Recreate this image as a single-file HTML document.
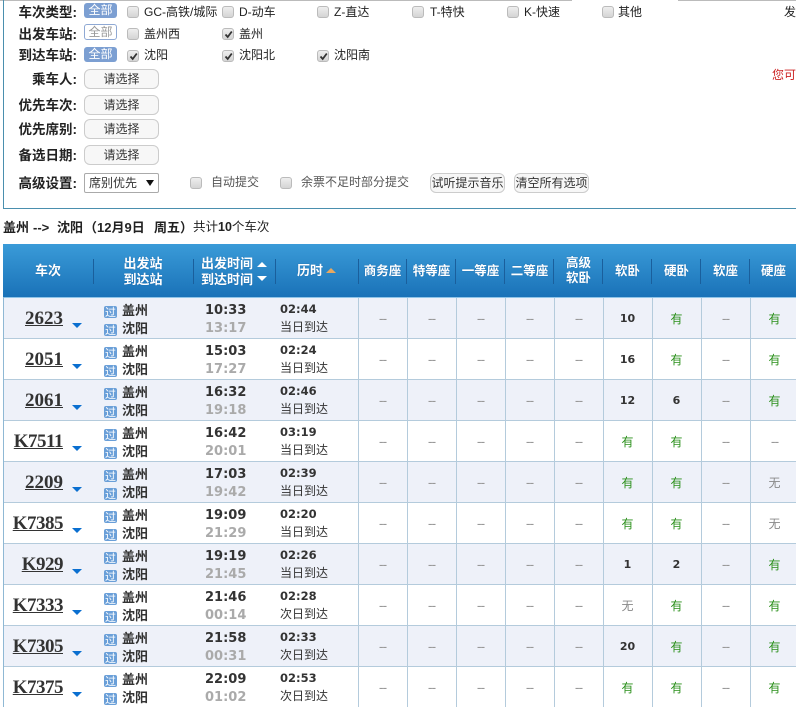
<!DOCTYPE html>
<html><head><meta charset="utf-8"><style>
html,body{margin:0;padding:0;width:796px;height:707px;overflow:hidden;background:#fff}
body{position:relative;font-family:"Liberation Sans","Noto Sans CJK SC",sans-serif;font-size:12px;color:#333}
.a{position:absolute;white-space:nowrap}
.l{position:absolute;left:0;width:77px;text-align:right;font-weight:bold;font-size:13.5px;line-height:18px;color:#222}
.all{position:absolute;left:84px;width:33px;height:15px;line-height:14px;border-radius:3px;background:#7c9fd2;color:#fff;text-align:center;font-size:12px;box-sizing:border-box}
.all.o{background:#fff;border:1px solid #8fa9d4;color:#999;line-height:14px;height:16px}
.b{position:absolute;left:84px;width:75px;height:20px;box-sizing:border-box;border:1px solid #ccc;border-radius:6px;background:#f7f7f7;text-align:center;line-height:18px;font-size:12px;color:#333}
.c{position:absolute;width:12px;height:12px;box-sizing:border-box;border:1px solid #bbb;border-radius:3px;background:linear-gradient(#eee,#d4d4d4)}
.c svg{position:absolute;left:1px;top:1px;width:9px;height:9px}
.t{position:absolute;font-size:12px;line-height:16px;white-space:nowrap;color:#222}
.h{position:absolute;color:#fff;font-weight:bold;font-size:13px;line-height:18px;text-align:center;white-space:nowrap;text-shadow:0 0 1px #1a5f9c}
.s{position:absolute;top:259px;width:1px;height:25px;background:#1a5f9c}
.ttl{position:absolute;top:219px;font-size:13px;line-height:17px;color:#222;white-space:nowrap}
.ttl.bd{font-weight:bold}
table{position:absolute;left:3px;top:298px;border-collapse:separate;border-spacing:0;table-layout:fixed;width:796px}
td{height:40px;padding:0;border-bottom:1px solid #b4cbdc;text-align:center;font-size:12px;color:#888;position:relative;box-sizing:content-box}
tr:nth-child(odd) td{background:#eef1f9}
tr:nth-child(even) td{background:#fff}
td.n{text-align:right;padding-right:30px;padding-top:2px;height:38px;width:60px;font:bold 19px "Liberation Serif",serif;color:#333;text-decoration:underline;border-left:0}
td.n.kk{letter-spacing:-.5px}
td.n:after{content:"";position:absolute;left:69px;top:25px;border-left:5px solid transparent;border-right:5px solid transparent;border-top:5px solid #0a6fd0}
td.st{text-align:left;vertical-align:top;padding-left:11px;padding-top:4px;height:36px;width:89px;font-weight:bold;font-size:13px;line-height:18px;color:#333;white-space:nowrap}
td.st i{display:inline-block;width:13px;height:12px;background:#6a9fd8;color:#fff;font:normal 11px/12px "Noto Sans CJK SC",sans-serif;text-align:center;border-radius:2px;margin-right:5px;vertical-align:-1px}
td.tm{text-align:left;vertical-align:top;padding-left:12px;padding-top:4px;height:36px;width:70px;font:bold 13px/18px "DejaVu Sans",sans-serif;color:#333}
td.tm span{color:#aaa}
td.d{text-align:left;vertical-align:top;padding-left:5px;padding-top:2px;height:38px;width:78px;line-height:18px;font-size:12px;color:#333}
td.d b{font:bold 11.5px "DejaVu Sans",sans-serif}
td.v{width:47px;border-left:1px solid #b4cbdc;padding:0 1px 0 0;font-size:14px;letter-spacing:-1px;color:#999}
td.v.y{color:#2a8f1a;font-size:12px;letter-spacing:0}
td.v.w{color:#888;font-size:12px;letter-spacing:0}
td.v.k{font:bold 11px "DejaVu Sans",sans-serif;color:#333;letter-spacing:0}
</style></head><body>
<div class="a" style="left:0;top:0;width:572px;height:1px;background:#bbb"></div>
<div class="a" style="left:678px;top:0;width:118px;height:1px;background:#bbb"></div>
<div class="a" style="left:3px;top:0;width:1px;height:209px;background:#4a8fae"></div>
<div class="a" style="left:3px;top:208px;width:793px;height:1px;background:#4a8fae"></div>

<div class="l" style="top:4px">车次类型:</div>
<div class="l" style="top:26px">出发车站:</div>
<div class="l" style="top:47px">到达车站:</div>
<div class="l" style="top:71px">乘车人:</div>
<div class="l" style="top:97px">优先车次:</div>
<div class="l" style="top:121px">优先席别:</div>
<div class="l" style="top:147px">备选日期:</div>
<div class="l" style="top:175px">高级设置:</div>

<div class="all" style="top:3px">全部</div>
<div class="all o" style="top:24px">全部</div>
<div class="all" style="top:47px">全部</div>

<div class="c" style="left:127px;top:6px"></div><div class="t" style="left:144px;top:4px">GC-高铁/城际</div>
<div class="c" style="left:222px;top:6px"></div><div class="t" style="left:239px;top:4px">D-动车</div>
<div class="c" style="left:317px;top:6px"></div><div class="t" style="left:334px;top:4px">Z-直达</div>
<div class="c" style="left:412px;top:6px"></div><div class="t" style="left:430px;top:4px">T-特快</div>
<div class="c" style="left:507px;top:6px"></div><div class="t" style="left:524px;top:4px">K-快速</div>
<div class="c" style="left:602px;top:6px"></div><div class="t" style="left:618px;top:4px">其他</div>
<div class="t" style="left:784px;top:4px">发</div>

<div class="c" style="left:127px;top:28px"></div><div class="t" style="left:144px;top:26px">盖州西</div>
<div class="c" style="left:222px;top:28px"><svg viewBox="0 0 9 9"><path d="M1.5 4.5L3.7 7L7.8 1.5" fill="none" stroke="#333" stroke-width="1.8"/></svg></div><div class="t" style="left:239px;top:26px">盖州</div>

<div class="c" style="left:127px;top:50px"><svg viewBox="0 0 9 9"><path d="M1.5 4.5L3.7 7L7.8 1.5" fill="none" stroke="#333" stroke-width="1.8"/></svg></div><div class="t" style="left:144px;top:47px">沈阳</div>
<div class="c" style="left:222px;top:50px"><svg viewBox="0 0 9 9"><path d="M1.5 4.5L3.7 7L7.8 1.5" fill="none" stroke="#333" stroke-width="1.8"/></svg></div><div class="t" style="left:239px;top:47px">沈阳北</div>
<div class="c" style="left:317px;top:50px"><svg viewBox="0 0 9 9"><path d="M1.5 4.5L3.7 7L7.8 1.5" fill="none" stroke="#333" stroke-width="1.8"/></svg></div><div class="t" style="left:334px;top:47px">沈阳南</div>

<div class="b" style="top:69px">请选择</div>
<div class="b" style="top:95px">请选择</div>
<div class="b" style="top:119px">请选择</div>
<div class="b" style="top:145px">请选择</div>
<div class="t" style="left:772px;top:67px;color:#c22">您可</div>

<div class="a" style="left:84px;top:173px;width:75px;height:20px;box-sizing:border-box;border:1px solid #aaa;border-radius:2px;background:#fff;line-height:18px;padding-left:4px;font-size:12px;color:#333">席别优先<span style="position:absolute;left:61px;top:6px;border-left:4px solid transparent;border-right:4px solid transparent;border-top:6px solid #111"></span></div>
<div class="c" style="left:190px;top:177px"></div><div class="t" style="left:211px;top:174px;color:#555">自动提交</div>
<div class="c" style="left:280px;top:177px"></div><div class="t" style="left:301px;top:174px;color:#555">余票不足时部分提交</div>
<div class="a" style="left:430px;top:173px;width:75px;height:20px;box-sizing:border-box;border:1px solid #ccc;border-radius:6px;background:#f7f7f7;text-align:center;line-height:18px;font-size:12px;overflow:hidden">试听提示音乐</div>
<div class="a" style="left:514px;top:173px;width:75px;height:20px;box-sizing:border-box;border:1px solid #ccc;border-radius:6px;background:#f7f7f7;text-align:center;line-height:18px;font-size:12px;overflow:hidden">清空所有选项</div>

<div class="ttl bd" style="left:3px">盖州</div>
<div class="ttl bd" style="left:33px">--&gt;</div>
<div class="ttl bd" style="left:57px">沈阳</div>
<div class="ttl bd" style="left:84px">（</div>
<div class="ttl bd" style="left:97px">12月9日</div>
<div class="ttl bd" style="left:154px">周五</div>
<div class="ttl bd" style="left:180px">）</div>
<div class="ttl" style="left:193px;font-size:12.5px">共计<b>10</b>个车次</div>

<div class="a" style="left:3px;top:244px;width:793px;height:53px;background:linear-gradient(#3a9bd8,#1a72b8)"></div>
<div class="a" style="left:3px;top:297px;width:793px;height:1px;background:#8fc4e8"></div>
<div class="h" style="left:3px;width:90px;top:262px">车次</div>
<div class="h" style="left:93px;width:100px;top:256px;line-height:16px">出发站<br>到达站</div>
<div class="h" style="left:201px;top:256px;line-height:15.5px;font-size:13px">出发时间<br>到达时间</div>
<div class="a" style="left:257px;top:262px;border-left:5px solid transparent;border-right:5px solid transparent;border-bottom:5px solid #fff"></div>
<div class="a" style="left:257px;top:276px;border-left:5px solid transparent;border-right:5px solid transparent;border-top:5px solid #fff"></div>
<div class="h" style="left:297px;top:262px">历时</div>
<div class="a" style="left:326px;top:268px;border-left:5px solid transparent;border-right:5px solid transparent;border-bottom:5px solid #e8a860"></div>
<div class="h" style="left:358px;width:49px;top:262px;font-size:12.5px">商务座</div>
<div class="h" style="left:407px;width:49px;top:262px;font-size:12.5px">特等座</div>
<div class="h" style="left:456px;width:49px;top:262px;font-size:12.5px">一等座</div>
<div class="h" style="left:505px;width:49px;top:262px;font-size:12.5px">二等座</div>
<div class="h" style="left:554px;width:49px;top:256px;font-size:12.5px;line-height:15px">高级<br>软卧</div>
<div class="h" style="left:603px;width:49px;top:262px;font-size:12.5px">软卧</div>
<div class="h" style="left:652px;width:49px;top:262px;font-size:12.5px">硬卧</div>
<div class="h" style="left:701px;width:49px;top:262px;font-size:12.5px">软座</div>
<div class="h" style="left:750px;width:47px;top:262px;font-size:12.5px">硬座</div>
<div class="s" style="left:93px"></div><div class="s" style="left:193px"></div><div class="s" style="left:275px"></div><div class="s" style="left:358px"></div><div class="s" style="left:406px"></div><div class="s" style="left:455px"></div><div class="s" style="left:504px"></div><div class="s" style="left:553px"></div><div class="s" style="left:602px"></div><div class="s" style="left:651px"></div><div class="s" style="left:700px"></div><div class="s" style="left:749px"></div>

<table><tbody>
<tr><td class="n">2623</td><td class="st"><i>过</i>盖州<br><i>过</i>沈阳</td><td class="tm">10:33<br><span>13:17</span></td><td class="d"><b>02:44</b><br>当日到达</td><td class="v">--</td><td class="v">--</td><td class="v">--</td><td class="v">--</td><td class="v">--</td><td class="v k">10</td><td class="v y">有</td><td class="v">--</td><td class="v y">有</td></tr>
<tr><td class="n">2051</td><td class="st"><i>过</i>盖州<br><i>过</i>沈阳</td><td class="tm">15:03<br><span>17:27</span></td><td class="d"><b>02:24</b><br>当日到达</td><td class="v">--</td><td class="v">--</td><td class="v">--</td><td class="v">--</td><td class="v">--</td><td class="v k">16</td><td class="v y">有</td><td class="v">--</td><td class="v y">有</td></tr>
<tr><td class="n">2061</td><td class="st"><i>过</i>盖州<br><i>过</i>沈阳</td><td class="tm">16:32<br><span>19:18</span></td><td class="d"><b>02:46</b><br>当日到达</td><td class="v">--</td><td class="v">--</td><td class="v">--</td><td class="v">--</td><td class="v">--</td><td class="v k">12</td><td class="v k">6</td><td class="v">--</td><td class="v y">有</td></tr>
<tr><td class="n kk">K7511</td><td class="st"><i>过</i>盖州<br><i>过</i>沈阳</td><td class="tm">16:42<br><span>20:01</span></td><td class="d"><b>03:19</b><br>当日到达</td><td class="v">--</td><td class="v">--</td><td class="v">--</td><td class="v">--</td><td class="v">--</td><td class="v y">有</td><td class="v y">有</td><td class="v">--</td><td class="v">--</td></tr>
<tr><td class="n">2209</td><td class="st"><i>过</i>盖州<br><i>过</i>沈阳</td><td class="tm">17:03<br><span>19:42</span></td><td class="d"><b>02:39</b><br>当日到达</td><td class="v">--</td><td class="v">--</td><td class="v">--</td><td class="v">--</td><td class="v">--</td><td class="v y">有</td><td class="v y">有</td><td class="v">--</td><td class="v w">无</td></tr>
<tr><td class="n kk">K7385</td><td class="st"><i>过</i>盖州<br><i>过</i>沈阳</td><td class="tm">19:09<br><span>21:29</span></td><td class="d"><b>02:20</b><br>当日到达</td><td class="v">--</td><td class="v">--</td><td class="v">--</td><td class="v">--</td><td class="v">--</td><td class="v y">有</td><td class="v y">有</td><td class="v">--</td><td class="v w">无</td></tr>
<tr><td class="n kk">K929</td><td class="st"><i>过</i>盖州<br><i>过</i>沈阳</td><td class="tm">19:19<br><span>21:45</span></td><td class="d"><b>02:26</b><br>当日到达</td><td class="v">--</td><td class="v">--</td><td class="v">--</td><td class="v">--</td><td class="v">--</td><td class="v k">1</td><td class="v k">2</td><td class="v">--</td><td class="v y">有</td></tr>
<tr><td class="n kk">K7333</td><td class="st"><i>过</i>盖州<br><i>过</i>沈阳</td><td class="tm">21:46<br><span>00:14</span></td><td class="d"><b>02:28</b><br>次日到达</td><td class="v">--</td><td class="v">--</td><td class="v">--</td><td class="v">--</td><td class="v">--</td><td class="v w">无</td><td class="v y">有</td><td class="v">--</td><td class="v y">有</td></tr>
<tr><td class="n kk">K7305</td><td class="st"><i>过</i>盖州<br><i>过</i>沈阳</td><td class="tm">21:58<br><span>00:31</span></td><td class="d"><b>02:33</b><br>次日到达</td><td class="v">--</td><td class="v">--</td><td class="v">--</td><td class="v">--</td><td class="v">--</td><td class="v k">20</td><td class="v y">有</td><td class="v">--</td><td class="v y">有</td></tr>
<tr><td class="n kk">K7375</td><td class="st"><i>过</i>盖州<br><i>过</i>沈阳</td><td class="tm">22:09<br><span>01:02</span></td><td class="d"><b>02:53</b><br>次日到达</td><td class="v">--</td><td class="v">--</td><td class="v">--</td><td class="v">--</td><td class="v">--</td><td class="v y">有</td><td class="v y">有</td><td class="v">--</td><td class="v y">有</td></tr>
</tbody></table>
<div class="a" style="left:3px;top:297px;width:1px;height:410px;background:#8fb8d4"></div>
</body></html>
